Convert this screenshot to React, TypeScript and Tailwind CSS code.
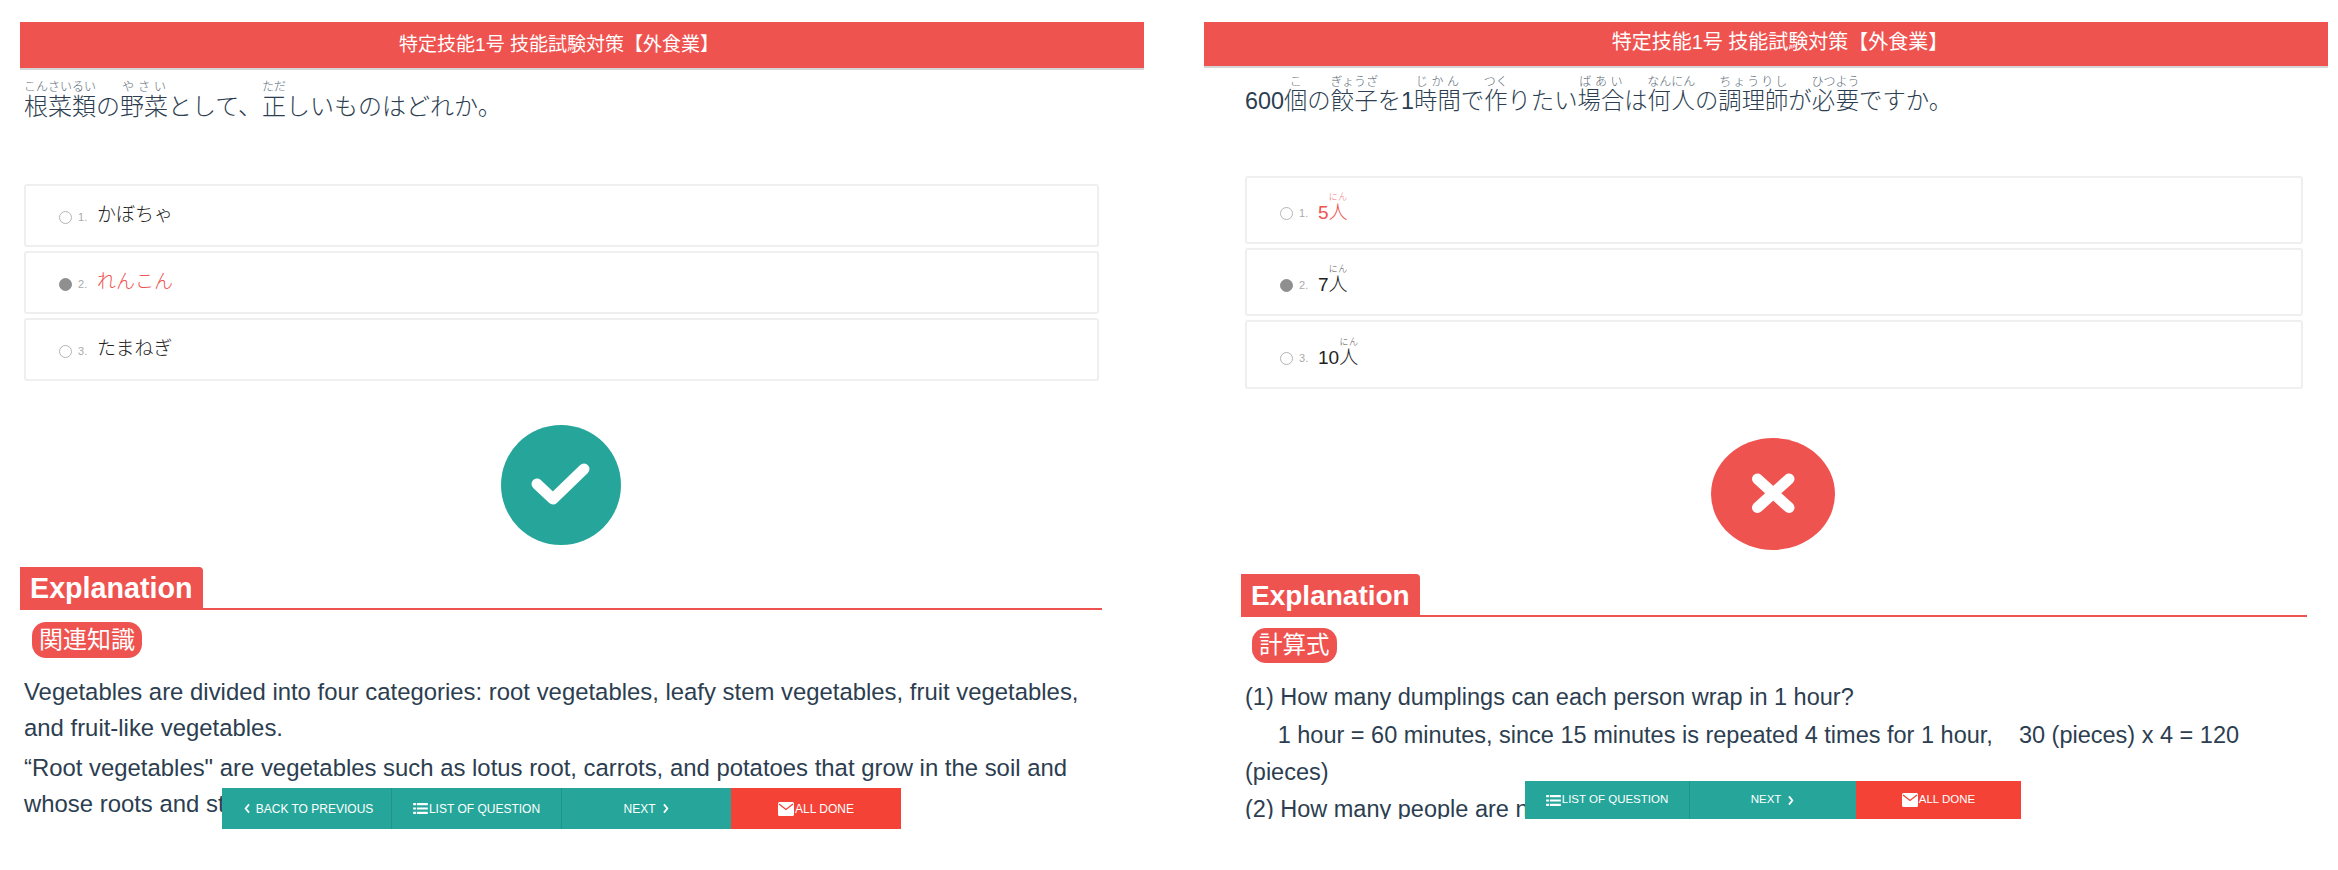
import type { ReactNode } from "react";

const SANS = "font-['Liberation_Sans','Noto_Sans_CJK_JP',sans-serif]";

function R({ t, r, className = "text-[12px]" }: { t: string; r: string; className?: string }) {
  return (
    <ruby>
      {t}
      <rt className={`${className} font-light opacity-80`}>{r}</rt>
    </ruby>
  );
}

function Option({
  n,
  selected,
  className,
  textClass,
  dotClass = "mt-[4px]",
  children,
}: {
  n: number;
  selected?: boolean;
  className: string;
  textClass: string;
  dotClass?: string;
  children: ReactNode;
}) {
  return (
    <div
      className={`flex items-center rounded-[3px] border-2 border-[#efefef] bg-white pl-[33px] ${className}`}
    >
      <span
        className={`h-[13px] w-[13px] rounded-full border ${dotClass} ${
          selected ? "border-[#8f8f8f] bg-[#8f8f8f]" : "border-[#b5b5b5]"
        }`}
      />
      <span className={`ml-[6px] w-[19px] text-[11px] text-[#aaaaaa] ${dotClass}`}>{n}.</span>
      <span className={`font-light ${textClass}`}>{children}</span>
    </div>
  );
}

function Explanation({ className, textSize }: { className: string; textSize: string }) {
  return (
    <div className={`border-b-2 border-[#ef5350] ${className}`}>
      <div className={`h-[41px] w-fit rounded-tr-[4px] bg-[#ef5350] px-[10px] font-bold leading-[43px] text-white ${textSize}`}>
        Explanation
      </div>
    </div>
  );
}

function Chevron({ dir }: { dir: "left" | "right" }) {
  return (
    <svg viewBox="0 0 10 16" className="h-[11px] w-[8px]" fill="none" stroke="white" strokeWidth="2.6">
      <path d={dir === "left" ? "M8 2 3 8l5 6" : "M2 2l5 6-5 6"} />
    </svg>
  );
}

function ListIcon() {
  return (
    <svg viewBox="0 0 16 12" className="h-[11px] w-[15px]" fill="white">
      <path d="M0 0h3v2.4H0zM4 0h12v2.4H4zM0 4.8h3v2.4H0zM4 4.8h12v2.4H4zM0 9.600h3V12H0zM4 9.600h12V12H4z" />
    </svg>
  );
}

function MailIcon() {
  return (
    <svg viewBox="0 0 16 14" className="h-[14px] w-[16px]">
      <path d="M1.500 0h13A1.500 1.500 0 0 1 16 1.500v11a1.500 1.500 0 0 1-1.500 1.500h-13A1.500 1.500 0 0 1 0 12.500v-11A1.500 1.500 0 0 1 1.500 0z" fill="white" />
      <path d="M1 2l7 5.500L15 2" fill="none" stroke="#f44336" strokeWidth="1.300" />
    </svg>
  );
}

function NavButton({ className, children }: { className: string; children: ReactNode }) {
  return (
    <div className={`flex items-center justify-center gap-[1px] text-white ${className}`}>{children}</div>
  );
}

function LeftPanel() {
  return (
    <div className="relative h-[870px] w-[1170px] shrink-0 overflow-hidden pl-[20px] pt-[22px]">
      <div className="flex h-[48px] w-[1124px] items-center justify-center border-b-2 border-[#d5d5d5] bg-[#ef5350] pr-[46px] text-[19px] text-white">
        特定技能1号 技能試験対策【外食業】
      </div>
      <div className="h-[114px] pl-[4px] pt-[20px] text-[24px] font-light leading-[34px] text-[#2c3e50]">
        <R t="根菜類" r="こんさいるい" />の<R t="野菜" r="やさい" />として、<R t="正" r="ただ" />しいものはどれか。
      </div>
      <div className="ml-[4px] flex w-[1075px] flex-col gap-[4px]">
        <Option n={1} className="h-[63px]" textClass="text-[19px] text-[#222222]">かぼちゃ</Option>
        <Option n={2} selected className="h-[63px]" textClass="text-[19px] text-[#ef5350]">れんこん</Option>
        <Option n={3} className="h-[63px]" textClass="text-[19px] text-[#222222]">たまねぎ</Option>
      </div>
      <div className="mt-[44px] flex h-[120px] pl-[481px]">
        <div className="h-[120px] w-[120px] rounded-[50%] bg-[#26a69a]">
          <svg viewBox="0 0 120 120" className="h-full w-full" fill="none" stroke="white" strokeWidth="11" strokeLinecap="round" strokeLinejoin="round">
            <path d="M36 59l16 15 31-30" />
          </svg>
        </div>
      </div>
      <Explanation className="mt-[22px] h-[43px] w-[1082px]" textSize="text-[28.700px]" />
      <div className="ml-[12px] mt-[12px] w-fit rounded-[14px] bg-[#ef5350] px-[7px] text-[24px] leading-[36px] text-white">
        関連知識
      </div>
      <div className="mt-[16px] w-[1090px] pl-[4px] text-[23.900px] leading-[36px] text-[#2c3e50]">
        <p>Vegetables are divided into four categories: root vegetables, leafy stem vegetables, fruit vegetables, and fruit-like vegetables.</p>
        <p className="mt-[4px]">“Root vegetables" are vegetables such as lotus root, carrots, and potatoes that grow in the soil and whose roots and stems are eaten.</p>
      </div>
      <div className="absolute left-[222px] top-[788px] flex h-[41px] text-[12px]">
        <NavButton className="w-[170px] border-r border-[#1f9488] bg-[#26a69a] pl-[3px]"><Chevron dir="left" /><span className="ml-[4px]">BACK TO PREVIOUS</span></NavButton>
        <NavButton className="w-[170px] border-r border-[#1f9488] bg-[#26a69a]"><ListIcon />LIST OF QUESTION</NavButton>
        <NavButton className="w-[169px] bg-[#26a69a]">NEXT<span className="ml-[5px]"><Chevron dir="right" /></span></NavButton>
        <NavButton className="w-[170px] bg-[#f44336]"><MailIcon />ALL DONE</NavButton>
      </div>
    </div>
  );
}

function RightPanel() {
  return (
    <div className="relative h-[819px] w-[1168px] shrink-0 overflow-hidden pl-[34px] pt-[22px]">
      <div className="flex h-[46px] w-[1124px] items-center justify-center border-b-2 border-[#d5d5d5] bg-[#ef5350] pb-[4px] pl-[28px] text-[20px] text-white">
        特定技能1号 技能試験対策【外食業】
      </div>
      <div className="h-[108px] pl-[41px] pt-[16px] text-[23.350px] font-light leading-[34px] text-[#2c3e50]">
        600<R t="個" r="こ" />の<R t="餃子" r="ぎょうざ" />を1<R t="時間" r="じかん" />で<R t="作" r="つく" />りたい<R t="場合" r="ばあい" />は<R t="何人" r="なんにん" />の<R t="調理師" r="ちょうりし" />が<R t="必要" r="ひつよう" />ですか。
      </div>
      <div className="ml-[41px] flex w-[1058px] flex-col gap-[4px]">
        <Option n={1} dotClass="mt-[7px]" className="h-[68px]" textClass="text-[19px] text-[#ef5350]">5<R t="人" r="にん" className="text-[9px]" /></Option>
        <Option n={2} selected dotClass="mt-[7px]" className="h-[68px]" textClass="text-[19px] text-[#222222]">7<R t="人" r="にん" className="text-[9px]" /></Option>
        <Option n={3} dotClass="mt-[7px]" className="h-[69px]" textClass="text-[19px] text-[#222222]">10<R t="人" r="にん" className="text-[9px]" /></Option>
      </div>
      <div className="mt-[49px] flex pl-[507px]">
        <div className="h-[112px] w-[124px] rounded-[50%] bg-[#ef5350]">
          <svg viewBox="0 0 124 112" className="h-full w-full" fill="none" stroke="white" strokeWidth="11" strokeLinecap="round">
            <path d="M46.500 41 78 69.500M78 41 46.500 69.500" />
          </svg>
        </div>
      </div>
      <Explanation className="ml-[37px] mt-[24px] h-[43px] w-[1066px]" textSize="text-[28px]" />
      <div className="ml-[48px] mt-[11px] w-fit rounded-[14px] bg-[#ef5350] px-[7px] text-[23.500px] leading-[35px] text-white">
        計算式
      </div>
      <div className="ml-[41px] mt-[16px] w-[1060px] text-[23.500px] leading-[37px] text-[#2c3e50]">
        <p>(1) How many dumplings can each person wrap in 1 hour?</p>
        <p className="mt-[1px]">&nbsp;&nbsp;&nbsp;&nbsp;&nbsp;1 hour = 60 minutes, since 15 minutes is repeated 4 times for 1 hour, &nbsp;&nbsp;&nbsp;30 (pieces) x 4 = 120 (pieces)</p>
        <p>(2) How many people are needed to make 600 dumplings?</p>
      </div>
      <div className="absolute left-[355px] top-[781px] flex h-[38px] text-[11.500px]">
        <NavButton className="w-[165px] border-r border-[#1f9488] bg-[#26a69a]"><ListIcon />LIST OF QUESTION</NavButton>
        <NavButton className="w-[166px] bg-[#26a69a]">NEXT<span className="ml-[5px]"><Chevron dir="right" /></span></NavButton>
        <NavButton className="w-[165px] bg-[#f44336]"><MailIcon />ALL DONE</NavButton>
      </div>
    </div>
  );
}

export default function App() {
  return (
    <div className={`flex h-[870px] w-[2338px] items-start overflow-hidden bg-white ${SANS}`}>
      <LeftPanel />
      <RightPanel />
    </div>
  );
}
